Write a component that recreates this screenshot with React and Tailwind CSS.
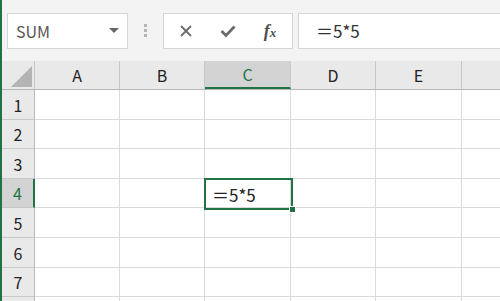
import React from "react";

const cols = [
  { label: "A", w: 85 },
  { label: "B", w: 85 },
  { label: "C", w: 86 },
  { label: "D", w: 85 },
  { label: "E", w: 86 },
  { label: "", w: 60 },
];
const rows = [
  { label: "1", h: 30 },
  { label: "2", h: 29 },
  { label: "3", h: 30 },
  { label: "4", h: 29 },
  { label: "5", h: 30 },
  { label: "6", h: 30 },
  { label: "7", h: 29 },
  { label: "", h: 29 },
];

const font = { fontFamily: '"Noto Sans CJK JP", "Noto Sans", sans-serif' };

export default function App() {
  return (
    <div
      className="relative w-[500px] h-[301px] overflow-hidden bg-white border-l-2 border-[#217346] text-[#222]"
      style={font}
    >
      {/* toolbar */}
      <div className="h-[61px] bg-[#f3f3f3] flex items-center">
        <div className="ml-[5px] w-[121px] h-[36px] bg-white border border-[#d6d6d6] flex items-center pl-[8px] pr-[8px]">
          <span className="text-[16px] text-[#555] leading-none">SUM</span>
          <span className="ml-auto w-0 h-0 border-l-[5px] border-r-[5px] border-t-[5px] border-l-transparent border-r-transparent border-t-[#666]" />
        </div>
        <div className="w-[35px] flex flex-col items-center gap-[2px]">
          <span className="w-[3px] h-[3px] bg-[#b5b5b5]" />
          <span className="w-[3px] h-[3px] bg-[#b5b5b5]" />
          <span className="w-[3px] h-[3px] bg-[#b5b5b5]" />
        </div>
        <div className="w-[130px] h-[36px] bg-white border border-[#d6d6d6] flex items-center">
          <div className="w-[44px] flex justify-center">
            <svg width="14" height="14" viewBox="0 0 14 14">
              <path d="M2 2 L12 12 M12 2 L2 12" stroke="#6b6b6b" strokeWidth="1.8" />
            </svg>
          </div>
          <div className="w-[40px] flex justify-center">
            <svg width="16" height="14" viewBox="0 0 16 14">
              <path d="M1.5 7 L6 11.5 L14.5 2.5" stroke="#6b6b6b" strokeWidth="2.8" fill="none" />
            </svg>
          </div>
          <div className="w-[44px] flex justify-center">
            <span
              className="text-[18px] text-[#505050] italic font-bold leading-none"
              style={{ fontFamily: '"Liberation Serif", serif' }}
            >
              f<span className="text-[13px]">x</span>
            </span>
          </div>
        </div>
        <div className="ml-[5px] flex-1 h-[36px] bg-white border border-[#d6d6d6] border-r-0 flex items-center pl-[17px]">
          <span className="text-[17px] leading-none text-[#333]">＝5*5</span>
        </div>
      </div>

      {/* header row */}
      <div className="flex h-[29px] bg-[#e9e9e9] border-b border-[#b8b8b8]">
        <div className="w-[33px] shrink-0 border-r border-[#c8c8c8] relative">
          <svg className="absolute left-[9px] top-[5px]" width="21" height="21" viewBox="0 0 21 21">
            <path d="M21 0 L21 21 L0 21 Z" fill="#b4b4b4" />
          </svg>
        </div>
        {cols.map((c, i) => (
          <div
            key={i}
            style={{ width: c.w }}
            className={
              "shrink-0 flex items-center justify-center text-[16px] border-r " +
              (c.label === "C"
                ? "bg-[#d3d3d3] text-[#217346] border-[#c8c8c8] border-b-2 border-b-[#217346]"
                : "border-[#c8c8c8]")
            }
          >
            {c.label}
          </div>
        ))}
      </div>

      {/* rows */}
      {rows.map((r, ri) => (
        <div key={ri} className="flex" style={{ height: r.h }}>
          <div
            className={
              "w-[33px] shrink-0 flex items-center justify-center text-[16px] border-b border-[#c8c8c8] " +
              (r.label === "4"
                ? "bg-[#d3d3d3] text-[#217346] border-r-2 border-r-[#217346]"
                : "bg-[#e9e9e9] border-r border-r-[#b8b8b8]")
            }
          >
            {r.label}
          </div>
          {cols.map((c, i) => (
            <div
              key={i}
              style={{ width: c.w }}
              className="shrink-0 border-r border-b border-[#dadada]"
            />
          ))}
        </div>
      ))}

      {/* selected cell C4 */}
      <div className="absolute left-[202px] top-[178px] w-[89px] h-[32px] border-2 border-[#217346] flex items-center pl-[6px]">
        <span className="text-[17px] leading-none text-[#222]">＝5*5</span>
        <span className="absolute right-[-5px] bottom-[-5px] w-[7px] h-[7px] bg-[#217346] border border-white" />
      </div>
    </div>
  );
}
